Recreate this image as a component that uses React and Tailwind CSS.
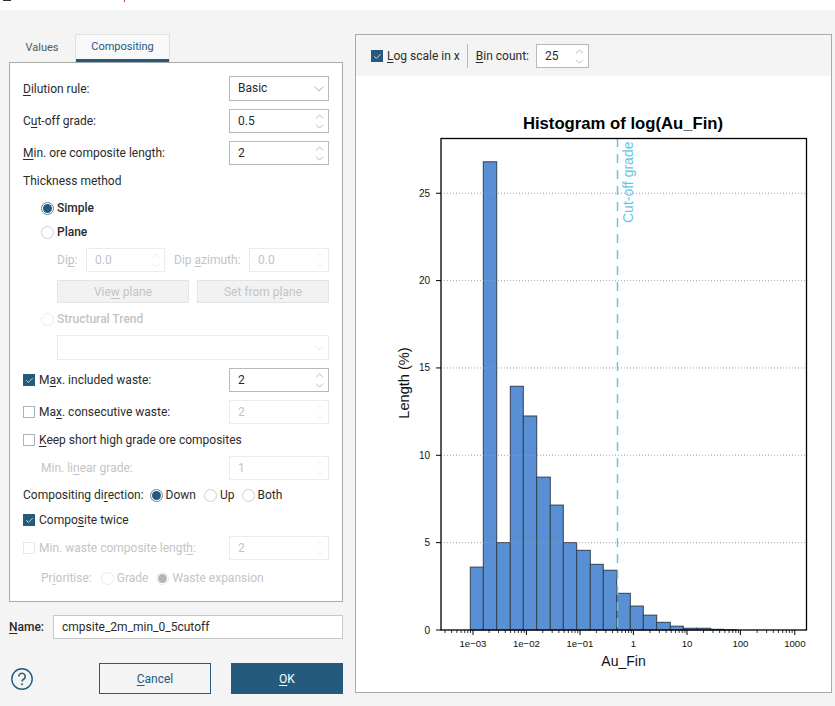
import { ChevronDown, ChevronUp, Check } from 'lucide-react';

const BLUE = 'bg-[#255a7f]';

function Spin({ disabled }) {
  const color = disabled ? 'text-[#e4e4e4]' : 'text-[#8f9498]';
  return (
    <div className={`flex flex-col items-center ${color}`}>
      <ChevronUp size={13} strokeWidth={1.2} className="-mb-[3px]" />
      <ChevronDown size={13} strokeWidth={1.2} />
    </div>
  );
}

function SpinBox({ value, disabled, width = 'w-[100px]' }) {
  return (
    <div className={`${width} h-[24px] bg-white border flex items-center justify-between pl-[8px] pr-[2px] ${disabled ? 'border-[#ececec] text-[#c4c4c4]' : 'border-[#b8b8b8] text-[#2b2b2b]'}`}>
      <span>{value}</span>
      <Spin disabled={disabled} />
    </div>
  );
}

function Radio({ on, disabled }) {
  if (on) {
    return (
      <span className={`w-[13px] h-[13px] rounded-full border flex items-center justify-center shrink-0 ${disabled ? 'border-[#e8e8e8]' : 'border-[#5f87a3]'}`}>
        <span className={`w-[9px] h-[9px] rounded-full ${disabled ? 'bg-[#b5b5b5]' : BLUE}`} />
      </span>
    );
  }
  return <span className={`w-[13px] h-[13px] rounded-full border shrink-0 bg-white ${disabled ? 'border-[#ececec]' : 'border-[#d0d0d0]'}`} />;
}

function CheckBox({ on, disabled }) {
  if (on) {
    return (
      <span className={`w-[12px] h-[12px] ${BLUE} flex items-center justify-center shrink-0 text-white`}>
        <Check size={9} strokeWidth={2} />
      </span>
    );
  }
  return <span className={`w-[12px] h-[12px] border bg-white shrink-0 ${disabled ? 'border-[#e8e8e8]' : 'border-[#a9b4bd]'}`} />;
}

function U({ children }) {
  return <span className="underline underline-offset-2 decoration-1">{children}</span>;
}

function Row({ label, children, className = '' }) {
  return (
    <div className={`flex items-center justify-between ${className}`}>
      <div className="flex items-center gap-[4px]">{label}</div>
      {children}
    </div>
  );
}

const bars = [
  [470.3, 3.6], [483.3, 26.8], [496.7, 5], [510.3, 13.95], [523.3, 12.25], [536.7, 8.75], [550.3, 7.15],
  [563.3, 5], [576.7, 4.56], [590.3, 3.76], [603.3, 3.42], [616.7, 2.1], [630.3, 1.37], [643.3, 0.85],
  [656.7, 0.44], [670.3, 0.22], [683.3, 0.1], [696.7, 0.1], [710.7, 0.04], [723.7, 0.01],
];
const barEnd = 737;
const Y0 = 630;
const PER_UNIT = 17.47;
const yTicks = [0, 5, 10, 15, 20, 25];
const xTicks = [
  ['1e\u221203', 473], ['1e\u221202', 526.4], ['1e\u221201', 580], ['1', 633.4], ['10', 687], ['100', 740.4], ['1000', 794.8],
];
const DECADE = 53.6;
const minorFactors = [2, 3, 4, 5, 6, 7, 8, 9];

function Chart() {
  // coordinates are page pixels, the viewBox is shifted to the white plot area
  const minors = [];
  for (let d = -1; d < 7; d++) {
    minorFactors.forEach((f) => {
      const x = 473 + (d + Math.log10(f)) * DECADE;
      if (x > 441 && x < 806) minors.push(x);
    });
  }
  return (
    <svg viewBox="356 76 475 616" className="w-[475px] h-[616px] block" style={{ fontFamily: '"Liberation Sans", sans-serif' }}>
      <text x="623" y="129" textAnchor="middle" fontSize="16.7" fontWeight="700" fill="#000">Histogram of log(Au_Fin)</text>
      {yTicks.slice(1).map((t) => (
        <line key={t} x1="441" x2="806" y1={Y0 - t * PER_UNIT} y2={Y0 - t * PER_UNIT} stroke="#b0b0b0" strokeWidth="1" strokeDasharray="1 2" />
      ))}
      {bars.map(([x, v], i) => {
        const next = i + 1 < bars.length ? bars[i + 1][0] : barEnd;
        return (
          <rect key={x} x={x} y={Y0 - v * PER_UNIT} width={next - x} height={v * PER_UNIT} fill="#5990d5" stroke="#33404f" strokeWidth="1" />
        );
      })}
      {yTicks.slice(1).map((t) => (
        <line key={t} x1="441" x2="806" y1={Y0 - t * PER_UNIT} y2={Y0 - t * PER_UNIT} stroke="#b0b0b0" strokeWidth="1" strokeDasharray="1 2" opacity="0.45" />
      ))}
      <line x1="617.5" x2="617.5" y1="138" y2="630" stroke="#66c6e4" strokeWidth="1.5" strokeDasharray="9 7" />
      <text transform="translate(633 223) rotate(-90)" fontSize="14" fill="#66c6e4">Cut-off grade</text>
      <rect x="441" y="138.5" width="365.5" height="491.5" fill="none" stroke="#000" strokeWidth="1.3" />
      {yTicks.map((t) => (
        <g key={t}>
          <line x1="436" x2="441" y1={Y0 - t * PER_UNIT} y2={Y0 - t * PER_UNIT} stroke="#000" strokeWidth="1" />
          <text x="430" y={Y0 - t * PER_UNIT + 3.5} textAnchor="end" fontSize="10" fill="#111">{t}</text>
        </g>
      ))}
      {minors.map((x) => (
        <line key={x} x1={x} x2={x} y1="630" y2="633" stroke="#000" strokeWidth="0.8" />
      ))}
      {xTicks.map(([l, x]) => (
        <g key={l}>
          <line x1={x} x2={x} y1="630" y2="635" stroke="#000" strokeWidth="1" />
          <text x={x} y="647" textAnchor="middle" fontSize="9.6" fill="#111">{l}</text>
        </g>
      ))}
      <text x="623.5" y="666" textAnchor="middle" fontSize="14" fill="#111">Au_Fin</text>
      <text transform="translate(409 383) rotate(-90)" textAnchor="middle" fontSize="14.6" fill="#111">Length (%)</text>
    </svg>
  );
}

export default function App() {
  return (
    <div className="w-[835px] h-[706px] bg-[#f4f4f4] overflow-hidden text-[12px] text-[#2b2b2b] font-['Roboto',sans-serif]">
      <div className="h-[10px] bg-white relative">
        {/* cropped title bar leftovers */}
        <span className="absolute left-[3px] top-0 w-[8px] h-[1px] bg-[#333]" />
        <span className="absolute left-[124px] top-0 w-[1px] h-[2px] bg-[#b04040]" />
      </div>
      <div className="flex pt-[24px] pl-[9px] gap-[12px]">
        {/* left column */}
        <div className="w-[334px] flex flex-col">
          <div className="flex h-[28px] items-stretch text-[11px]">
            <div className="w-[66px] flex items-center justify-center text-[#4d5a65]">Values</div>
            <div className="w-[95px] border-t border-x border-[#e2e2e2] bg-[#f8f8f8] flex flex-col text-[#255a7f]">
              <div className="flex-1 flex items-center justify-center">Compositing</div>
              <div className={`h-[3px] ${BLUE}`} />
            </div>
          </div>
          <div className="h-[540px] bg-white border border-[#a9a9a9] pl-[13px] pr-[13px] pt-[13px] flex flex-col">
            <Row label={<span><U>D</U>ilution rule:</span>}>
              <div className="w-[100px] h-[25px] bg-white border border-[#b8b8b8] flex items-center justify-between pl-[8px] pr-[1px]">
                <span className="pb-[2px]">Basic</span>
                <ChevronDown size={16} strokeWidth={1.1} className="text-[#8f9498]" />
              </div>
            </Row>
            <Row className="mt-[8px]" label={<span>C<U>u</U>t-off grade:</span>}>
              <SpinBox value="0.5" />
            </Row>
            <Row className="mt-[8px]" label={<span><U>M</U>in. ore composite length:</span>}>
              <SpinBox value="2" />
            </Row>
            <div className="mt-[9px] h-[14px] leading-[14px]">Thickness method</div>
            <div className="mt-[13px] h-[14px] pl-[18px] flex items-center gap-[3px] font-medium"><Radio on /> Simple</div>
            <div className="mt-[10px] h-[14px] pl-[18px] flex items-center gap-[3px] font-medium"><Radio /> Plane</div>
            <div className="mt-[9px] pl-[34px] flex items-center text-[#c4c4c4]">
              <span className="w-[29px]">Di<U>p</U>:</span>
              <SpinBox value="0.0" disabled width="w-[79px]" />
              <span className="ml-[9px] w-[75px]">Dip <U>a</U>zimuth:</span>
              <SpinBox value="0.0" disabled width="w-[80px]" />
            </div>
            <div className="mt-[8px] pl-[34px] flex gap-[8px] text-[#c4c4c4]">
              <div className="w-[132px] h-[23px] bg-[#f2f2f2] border border-[#e4e4e4] flex items-center justify-center"><span>Vie<U>w</U> plane</span></div>
              <div className="w-[132px] h-[23px] bg-[#f2f2f2] border border-[#e4e4e4] flex items-center justify-center"><span>Set from p<U>l</U>ane</span></div>
            </div>
            <div className="mt-[9px] h-[14px] pl-[18px] flex items-center gap-[3px] font-medium text-[#c4c4c4]"><Radio disabled /> Structural Trend</div>
            <div className="mt-[9px] ml-[34px] h-[25px] bg-white border border-[#ececec] flex items-center justify-end pr-[1px]">
              <ChevronDown size={16} strokeWidth={1.1} className="text-[#e4e4e4]" />
            </div>
            <Row className="mt-[8px]" label={<><CheckBox on /><span>M<U>a</U>x. included waste:</span></>}>
              <SpinBox value="2" />
            </Row>
            <Row className="mt-[8px]" label={<><CheckBox /><span>Ma<U>x</U>. consecutive waste:</span></>}>
              <SpinBox value="2" disabled />
            </Row>
            <div className="mt-[9px] h-[14px] flex items-center gap-[4px]"><CheckBox /><span><U>K</U>eep short high grade ore composites</span></div>
            <Row className="mt-[9px] pl-[18px] text-[#c4c4c4]" label={<span>Min. li<U>n</U>ear grade:</span>}>
              <SpinBox value="1" disabled />
            </Row>
            <div className="mt-[8px] h-[14px] flex items-center">
              <span>Compositing di<U>r</U>ection:</span>
              <span className="ml-[6px] flex items-center gap-[3px]"><Radio on /> Down</span>
              <span className="ml-[8px] flex items-center gap-[3px]"><Radio /> Up</span>
              <span className="ml-[7px] flex items-center gap-[3px]"><Radio /> Both</span>
            </div>
            <div className="mt-[11px] h-[14px] flex items-center gap-[4px]"><CheckBox on /><span>Compo<U>s</U>ite twice</span></div>
            <Row className="mt-[9px] text-[#c4c4c4]" label={<><CheckBox disabled /><span>Min. waste composite lengt<U>h</U>:</span></>}>
              <SpinBox value="2" disabled />
            </Row>
            <div className="mt-[11px] h-[14px] pl-[18px] flex items-center text-[#c4c4c4]">
              <span>Pr<U>i</U>oritise:</span>
              <span className="ml-[9px] flex items-center gap-[3px]"><Radio disabled /> Grade</span>
              <span className="ml-[8px] flex items-center gap-[3px]"><Radio on disabled /> Waste expansion</span>
            </div>
          </div>
          <div className="mt-[13px] flex items-center">
            <span className="w-[44px] font-medium"><U>N</U>ame:</span>
            <div className="w-[290px] h-[24px] bg-white border border-[#c8c8c8] flex items-center pl-[8px]">cmpsite_2m_min_0_5cutoff</div>
          </div>
          <div className="mt-[24px] flex items-center">
            <svg width="24" height="24" viewBox="0 0 24 24" className="ml-[1px]" fill="none">
              <circle cx="12" cy="12" r="10.2" stroke="#255a7f" strokeWidth="1.4" />
              <path d="M8.8 9.4a3.2 3.2 0 1 1 4.8 2.8c-1 .6-1.6 1.2-1.6 2.4" stroke="#255a7f" strokeWidth="1.6" />
              <circle cx="12" cy="17.3" r="1" fill="#255a7f" />
            </svg>
            <div className="ml-[65px] w-[112px] h-[31px] border border-[#255a7f] text-[#255a7f] flex items-center justify-center"><span><U>C</U>ancel</span></div>
            <div className={`ml-[20px] w-[112px] h-[31px] ${BLUE} text-white flex items-center justify-center`}><span><U>O</U>K</span></div>
          </div>
        </div>
        {/* right panel */}
        <div className="w-[477px] h-[659px] border border-[#a9a9a9] flex flex-col">
          <div className="h-[41px] flex items-center pl-[15px] pt-[1px]">
            <CheckBox on />
            <span className="ml-[4px]"><U>L</U>og scale in x</span>
            <span className="ml-[7px] w-[1px] h-[24px] bg-[#b8b8b8]" />
            <span className="ml-[8px]"><U>B</U>in count:</span>
            <SpinBox value="25" width="w-[53px] ml-[7px]" />
          </div>
          <div className="flex-1 bg-white">
            <Chart />
          </div>
        </div>
      </div>
    </div>
  );
}
